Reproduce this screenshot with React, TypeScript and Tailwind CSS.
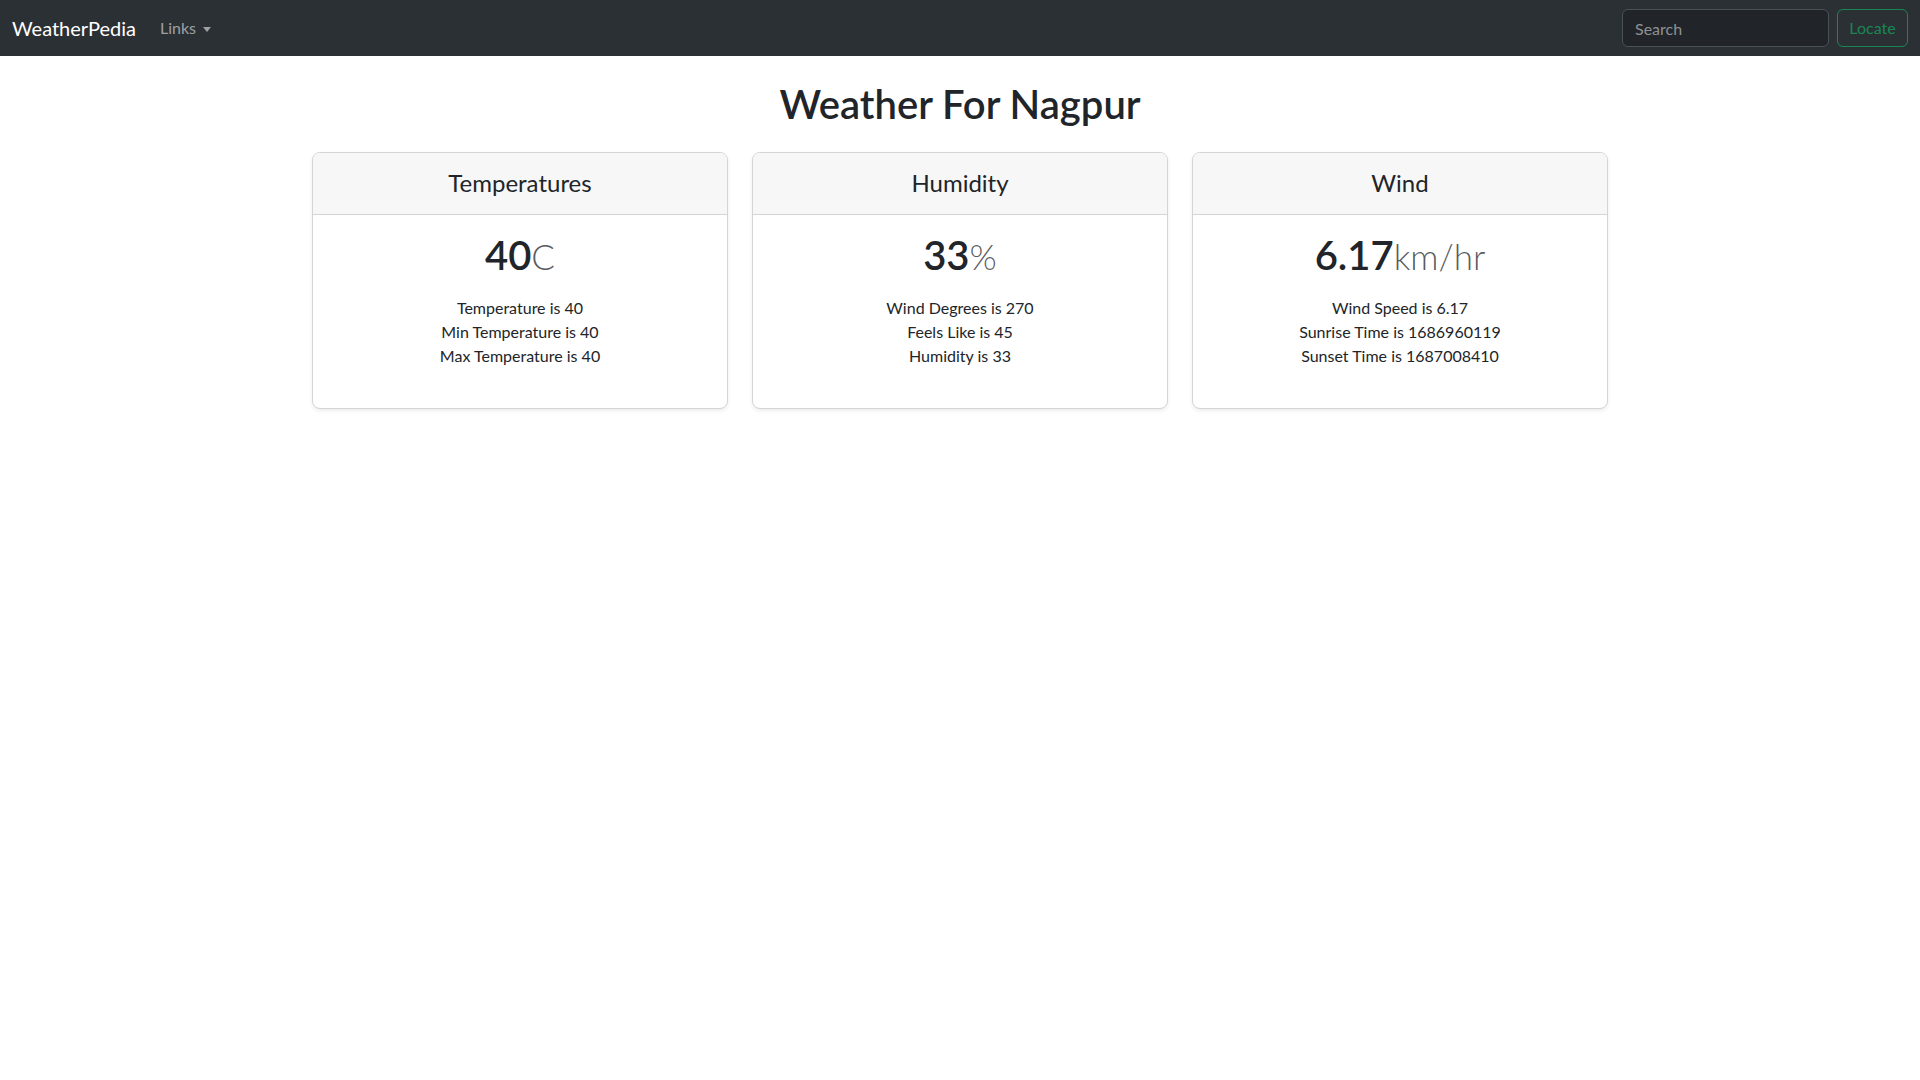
const font = { fontFamily: '"Segoe UI", Lato, "Liberation Sans", sans-serif' }

type Card = {
  title: string
  value: string
  unit: string
  lines: string[]
}

const cards: Card[] = [
  {
    title: 'Temperatures',
    value: '40',
    unit: 'C',
    lines: ['Temperature is 40', 'Min Temperature is 40', 'Max Temperature is 40'],
  },
  {
    title: 'Humidity',
    value: '33',
    unit: '%',
    lines: ['Wind Degrees is 270', 'Feels Like is 45', 'Humidity is 33'],
  },
  {
    title: 'Wind',
    value: '6.17',
    unit: 'km/hr',
    lines: ['Wind Speed is 6.17', 'Sunrise Time is 1686960119', 'Sunset Time is 1687008410'],
  },
]

function Navbar() {
  return (
    <nav className="flex h-[56px] items-center justify-between bg-[#2b3035] px-3">
      <div className="flex items-center">
        <a className="mr-4 text-[20px] leading-[30px] text-white">WeatherPedia</a>
        <button className="flex items-center gap-[7px] px-2 py-2 text-[16px] text-[rgba(255,255,255,0.55)]">
          Links
          <span className="mt-[2px] h-0 w-0 border-x-[4px] border-t-[5px] border-x-transparent border-t-[rgba(255,255,255,0.55)]" />
        </button>
      </div>
      <form className="flex items-center">
        <input
          type="search"
          placeholder="Search"
          className="mr-2 h-[38px] w-[207px] rounded-md border border-[#495057] bg-[#212529] px-3 text-[16px] text-[#dee2e6] outline-none placeholder:text-[#8f9193]"
        />
        <button
          type="button"
          className="h-[38px] w-[71px] rounded-md border border-[#198754] text-[16px] text-[#198754]"
        >
          Locate
        </button>
      </form>
    </nav>
  )
}

function WeatherCard({ card }: { card: Card }) {
  return (
    <div className="overflow-hidden rounded-lg border border-[#d3d4d5] bg-white shadow-[0_2px_4px_rgba(0,0,0,0.075)]">
      <div className="border-b border-[#d3d4d5] bg-[#f7f7f7] py-4 text-center">
        <h4 className="text-[24px] leading-[28.8px] font-normal">{card.title}</h4>
      </div>
      <div className="p-4 text-center">
        <h1 className="text-[40px] leading-[48px] font-semibold">
          {card.value}
          <small className="text-[35px] font-light text-[rgba(33,37,41,0.75)]">{card.unit}</small>
        </h1>
        <ul className="mt-4 mb-6 text-[16px] leading-[24px]">
          {card.lines.map((line) => (
            <li key={line}>{line}</li>
          ))}
        </ul>
      </div>
    </div>
  )
}

export default function App() {
  return (
    <div className="min-h-screen bg-white text-[#212529]" style={font}>
      <Navbar />
      <main className="mx-auto w-[1320px] px-3">
        <h1 className="my-6 text-center text-[40px] leading-[48px] font-semibold">Weather For Nagpur</h1>
        <div className="grid grid-cols-3 gap-6">
          {cards.map((card) => (
            <WeatherCard key={card.title} card={card} />
          ))}
        </div>
      </main>
    </div>
  )
}
